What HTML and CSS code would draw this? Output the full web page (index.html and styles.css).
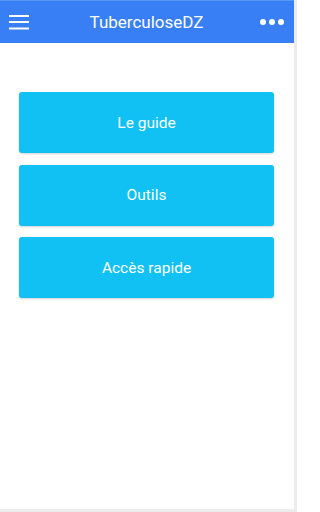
FILE: index.html
```html
<!DOCTYPE html>
<html lang="fr">
<head>
<meta charset="utf-8">
<title>TuberculoseDZ</title>
<link rel="stylesheet" href="styles.css">
</head>
<body>
<div class="screen">
  <header class="bar">
    <button class="icon-btn menu" aria-label="Menu">
      <svg width="20" height="16" viewBox="0 0 20 16"><rect x="0" y="1" width="20" height="2" fill="#fff"/><rect x="0" y="7" width="20" height="2" fill="#fff"/><rect x="0" y="13.5" width="20" height="2" fill="#fff"/></svg>
    </button>
    <h1 class="title">TuberculoseDZ</h1>
    <button class="icon-btn more" aria-label="Plus">
      <span class="dot"></span><span class="dot"></span><span class="dot"></span>
    </button>
  </header>
  <main class="content">
    <a class="btn">Le guide</a>
    <a class="btn">Outils</a>
    <a class="btn">Accès rapide</a>
  </main>
</div>
</body>
</html>
```

FILE: styles.css
```css
html {
  margin: 0;
  padding: 0;
  background: #fff;
}
body {
  margin: 0;
  padding: 0;
  width: 297px;
  height: 512px;
  background: #ececec;
  font-family: Roboto, "Noto Sans", sans-serif;
  overflow: hidden;
}
.screen {
  width: 294px;
  height: 509px;
  background: #fff;
  display: flex;
  flex-direction: column;
}
.bar {
  height: 43px;
  background: #387ef5;
  display: flex;
  align-items: center;
  justify-content: space-between;
  padding: 0 9px 0 9px;
  box-sizing: border-box;
  border-top: 1px solid #5a95f7;
}
.icon-btn {
  background: none;
  border: 0;
  padding: 0;
  display: flex;
  align-items: center;
  gap: 3px;
  width: 36px;
  height: 20px;
}
.menu {
  justify-content: flex-start;
}
.more {
  justify-content: flex-end;
  margin-right: 1px;
}
.dot {
  width: 6px;
  height: 6px;
  border-radius: 50%;
  background: #fff;
}
.title {
  margin: 0;
  color: #fff;
  font-size: 17px;
  font-weight: 400;
  flex: 1;
  text-align: center;
}
.content {
  padding: 49px 20px 0 19px;
  display: flex;
  flex-direction: column;
  gap: 11.5px;
}
.btn {
  display: flex;
  align-items: center;
  justify-content: center;
  height: 61px;
  background: #11c1f3;
  color: #fff;
  font-size: 15.5px;
  border-radius: 3px;
  box-shadow: 0 1px 2px rgba(0,0,0,0.18);
}
```
